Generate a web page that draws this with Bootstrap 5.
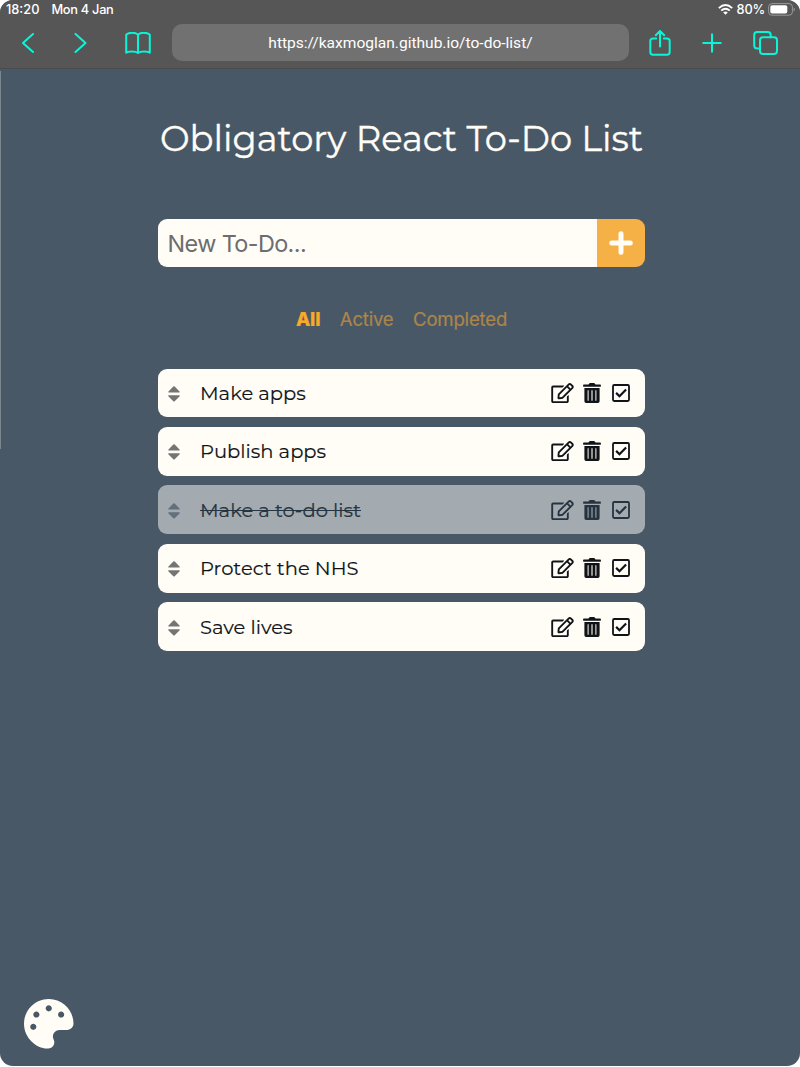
<!DOCTYPE html>
<html lang="en">
<head>
<meta charset="utf-8">
<meta name="viewport" content="width=device-width, initial-scale=1">
<title>To-Do List</title>
<link rel="stylesheet" href="https://cdn.jsdelivr.net/npm/bootstrap@5.3.0/dist/css/bootstrap.min.css">
<style>
html { background: #fff; }
body { background: #fff; font-family: Inter, sans-serif; color: #fffdf6; }
.tablet { height: 1066px; border-radius: 13px; background: #495867; }
.chrome { height: 69px; background: #565656; border-bottom: 1px solid #4c4c4c; }
.status { height: 18px; font-size: 12.8px; font-weight: 500; line-height: 18px; padding: 1px 5px 0 6px; color: #fff; }
.status .date { margin-left: 12px; letter-spacing: -.28px; }
.status .charge { letter-spacing: -.2px; }
.toolbar { height: 49px; padding: 0 22px 0 21px; }
.toolbar svg { stroke: #08f5d8; fill: none; stroke-width: 2; stroke-linecap: round; stroke-linejoin: round; display: block; }
.address { width: 457px; height: 37px; border-radius: 10px; background: #717171; font: 15.55px/38px Roboto, sans-serif; color: #fff; }
.side-line { left: 0; top: 71px; width: 1px; height: 378px; background: #7c8890; }
.todo-app { width: 487px; margin-left: 158px; }
.title { font: 400 35.3px/40px Montserrat, Inter, sans-serif; -webkit-text-stroke: .35px currentColor; margin: 50px 0 0 2px; }
.entry { height: 48.5px; margin-top: 59.5px; border-radius: 9px; }
.entry .form-control { background: #fffdf6; border: 0; border-radius: 0; padding: 2px 0 0 9.5px; font-size: 23.4px; letter-spacing: -.6px; height: 100%; box-shadow: none; }
.entry .form-control::placeholder { color: #6d6d6d; opacity: 1; }
.entry .btn { width: 48.5px; background: #f5b046; border: 0; border-radius: 0; padding: 0; }
.filters { margin: 38.500px 0 0 138px; gap: 19.5px; font-size: 18.6px; line-height: 26px; letter-spacing: -.2px; color: #ad8549; -webkit-text-stroke: .2px currentColor; }
.filters .chosen { color: #f7a928; font-weight: 800; }
.tasks { margin-top: 37px; gap: 9.9px; }
.task { height: 48.6px; border-radius: 9px; background: #fffdf6; color: #101418; padding: 0 15px 0 10px; }
.task .name { font: 400 19.5px/28px Montserrat, Inter, sans-serif; -webkit-text-stroke: .15px currentColor; margin-left: 20px; }
.task.done { background: #a4abb0; color: #263441; }
.task.done .name { text-decoration: line-through; text-decoration-thickness: 1px; }
.sorter { fill: #747474; margin-top: 2px; }
.done .sorter { fill: #626f7c; }
.palette { left: 24px; top: 999px; }
</style>
</head>
<body>
<svg class="d-none" xmlns="http://www.w3.org/2000/svg">
  <symbol id="sort" viewBox="0 0 12 16"><path d="M.7 6.500Q-.2 6.300.5 5.400L5.300.5Q6 0 6.700.5l4.800 4.900q.7.9-.2 1.100zM.7 9.300q-.9.2-.2 1.100l4.800 4.900q.7.5 1.400 0l4.800-4.900q.7-.9-.2-1.100z"/></symbol>
  <symbol id="edit" viewBox="0 0 576 512"><path fill="currentColor" d="M402.300 344.900l32-32c5-5 13.700-1.500 13.700 5.700V464c0 26.500-21.500 48-48 48H48c-26.500 0-48-21.500-48-48V112c0-26.500 21.500-48 48-48h273.500c7.100 0 10.700 8.600 5.700 13.700l-32 32c-1.500 1.500-3.500 2.300-5.700 2.300H48v352h352V350.500c0-2.100.8-4.100 2.300-5.600zm156.600-201.800L296.300 405.700l-90.400 10c-26.200 2.900-48.500-19.200-45.600-45.600l10-90.400L432.900 17.100c22.900-22.900 59.900-22.900 82.700 0l43.200 43.200c22.900 22.900 22.900 60 .1 82.800zM460.100 174L402 115.900 216.200 301.800l-7.300 65.300 65.300-7.300L460.100 174zm64.800-79.700l-43.200-43.200c-4.100-4.100-10.800-4.100-14.800 0L436 82l58.100 58.100 30.900-30.900c4-4.200 4-10.800-.1-14.900z"/></symbol>
  <symbol id="trash" viewBox="0 0 18 20"><path fill="currentColor" fill-rule="evenodd" d="M.8 1.600h4.700L6.200.4Q6.400 0 7 0h4q.6 0 .8.4l.7 1.200h4.700q.7 0 .7.7v1q0 .4-.4.4H.5Q.1 3.700.1 3.300v-1q0-.7.7-.7zM1.400 4.900h15.200v13.300q0 1.700-1.700 1.700H3.100q-1.700 0-1.700-1.700zM4.600 7.400v10q0 .4.500.4t.5-.4v-10q0-.4-.5-.4t-.5.4zm3.850 0v10q0 .4.550.4t.550-.4v-10q0-.4-.550-.4t-.550.4zm3.950 0v10q0 .4.500.4t.5-.4v-10q0-.4-.5-.4t-.5.4z"/></symbol>
  <symbol id="check" viewBox="0 0 18 18"><rect x="1" y="1" width="16" height="16" rx="1.200" fill="none" stroke="currentColor" stroke-width="1.800"/><path d="M4.100 8.900l3.400 3.300 6.600-6.700" fill="none" stroke="currentColor" stroke-width="2.200"/></symbol>
</svg>

<div class="tablet position-relative overflow-hidden">
  <header class="chrome">
    <div class="status d-flex align-items-center">
      <span>18:20</span><span class="date">Mon 4 Jan</span>
      <svg class="ms-auto" width="15" height="11" viewBox="0 0 15 11" fill="none" stroke="#fff" stroke-width="1.900"><path d="M.8 4.100Q7.500-1.900 14.200 4.100M3.200 6.600q4.300-3.700 8.600 0"/><path d="M7.500 10.800L5.200 8.500q2.300-1.800 4.600 0z" fill="#fff" stroke="none"/></svg>
      <span class="charge ms-1">80%</span>
      <svg style="margin-left:3px" width="27" height="13" viewBox="0 0 27 13"><rect x=".6" y=".6" width="23.800" height="11.600" rx="3.300" fill="none" stroke="#999" stroke-width="1"/><rect x="2.300" y="2.200" width="17" height="8.400" rx="1.800" fill="#fff"/><path d="M25.600 4.400q1.300.5 1.300 2t-1.300 2z" fill="#999"/></svg>
    </div>
    <div class="toolbar d-flex align-items-center">
      <svg width="14" height="20" viewBox="0 0 14 20"><path d="M12 .9L2 10l10 9.100"/></svg>
      <svg style="margin-left:38px" width="14" height="20" viewBox="0 0 14 20"><path d="M2.500.9L12.500 10l-10 9.100"/></svg>
      <svg style="margin-left:38px" width="26" height="22" viewBox="0 0 26 22"><path d="M13 3.200Q12 .8 7.500.8T1.200 2.600v18.200q1-1.400 5.500-1.400t6.300 1.600q1.800-1.600 6.300-1.600t5.500 1.400V2.600Q23 .8 18.500.8T13 3.200V21"/></svg>
      <div class="address text-center" style="margin-left:21px">https://kaxmoglan.github.io/to-do-list/</div>
      <svg style="margin-left:20px" width="22" height="26" viewBox="0 0 22 26"><path d="M7.200 8.500H4Q1.300 8.500 1.300 11.200v10.900Q1.300 24.800 4 24.800h14q2.700 0 2.700-2.700V11.200q0-2.700-2.700-2.700h-3.200M11 16.500V1.300M6.800 5.200L11 1l4.200 4.200"/></svg>
      <svg style="margin-left:31px" width="20" height="20" viewBox="0 0 20 20"><path d="M1.200 10h17.600M10 1.200v17.600"/></svg>
      <svg style="margin-left:31px" width="25" height="24" viewBox="0 0 25 24"><rect x="7" y="6.300" width="17" height="16.700" rx="3"/><path d="M6.600 17.600H4.200Q1.200 17.600 1.200 14.600V4Q1.200 1 4.200 1h10.500q3 0 3 3v1.900"/></svg>
    </div>
  </header>
  <div class="side-line position-absolute"></div>

  <main class="todo-app">
    <h1 class="title text-nowrap">Obligatory React To-Do List</h1>
    <div class="entry input-group flex-nowrap overflow-hidden">
      <input class="form-control" type="text" placeholder="New To-Do..." aria-label="New To-Do">
      <button class="btn d-flex align-items-center justify-content-center" type="button" aria-label="Add"><svg width="24" height="24" viewBox="0 0 24 24" stroke="#fffdf6" stroke-width="5" stroke-linecap="round"><path d="M2.700 12h18.600M12 2.700v18.600"/></svg></button>
    </div>
    <nav class="filters d-flex"><span class="chosen">All</span><span>Active</span><span>Completed</span></nav>
    <div class="tasks d-flex flex-column">
      <div class="task d-flex align-items-center"><svg class="sorter" width="12" height="16"><use href="#sort"/></svg><span class="name">Make apps</span><svg class="ms-auto" width="23" height="20"><use href="#edit"/></svg><svg style="margin-left:9px" width="18" height="20"><use href="#trash"/></svg><svg style="margin-left:11px" width="18" height="18"><use href="#check"/></svg></div>
      <div class="task d-flex align-items-center"><svg class="sorter" width="12" height="16"><use href="#sort"/></svg><span class="name">Publish apps</span><svg class="ms-auto" width="23" height="20"><use href="#edit"/></svg><svg style="margin-left:9px" width="18" height="20"><use href="#trash"/></svg><svg style="margin-left:11px" width="18" height="18"><use href="#check"/></svg></div>
      <div class="task done d-flex align-items-center"><svg class="sorter" width="12" height="16"><use href="#sort"/></svg><span class="name">Make a to-do list</span><svg class="ms-auto" width="23" height="20"><use href="#edit"/></svg><svg style="margin-left:9px" width="18" height="20"><use href="#trash"/></svg><svg style="margin-left:11px" width="18" height="18"><use href="#check"/></svg></div>
      <div class="task d-flex align-items-center"><svg class="sorter" width="12" height="16"><use href="#sort"/></svg><span class="name">Protect the NHS</span><svg class="ms-auto" width="23" height="20"><use href="#edit"/></svg><svg style="margin-left:9px" width="18" height="20"><use href="#trash"/></svg><svg style="margin-left:11px" width="18" height="18"><use href="#check"/></svg></div>
      <div class="task d-flex align-items-center"><svg class="sorter" width="12" height="16"><use href="#sort"/></svg><span class="name">Save lives</span><svg class="ms-auto" width="23" height="20"><use href="#edit"/></svg><svg style="margin-left:9px" width="18" height="20"><use href="#trash"/></svg><svg style="margin-left:11px" width="18" height="18"><use href="#check"/></svg></div>
    </div>
  </main>
  <svg class="palette position-absolute" width="49.5" height="49.5" viewBox="0 0 512 512"><path fill="#fffdf6" d="M204.300 5C104.900 24.400 24.800 104.300 5.200 203.400c-37 187 131.700 326.400 258.800 306.700 41.200-6.400 61.400-54.600 42.500-91.700-23.100-45.400 9.900-98.400 60.900-98.400h79.700c35.800 0 64.800-29.600 64.900-65.300C511.500 97.100 368.100-26.900 204.300 5zM96 320c-17.700 0-32-14.300-32-32s14.300-32 32-32 32 14.300 32 32-14.300 32-32 32zm32-128c-17.700 0-32-14.300-32-32s14.300-32 32-32 32 14.300 32 32-14.300 32-32 32zm128-64c-17.700 0-32-14.300-32-32s14.300-32 32-32 32 14.300 32 32-14.300 32-32 32zm128 64c-17.700 0-32-14.300-32-32s14.300-32 32-32 32 14.300 32 32-14.300 32-32 32z"/></svg>
</div>
<script src="https://cdn.jsdelivr.net/npm/bootstrap@5.3.0/dist/js/bootstrap.bundle.min.js"></script>
</body>
</html>
